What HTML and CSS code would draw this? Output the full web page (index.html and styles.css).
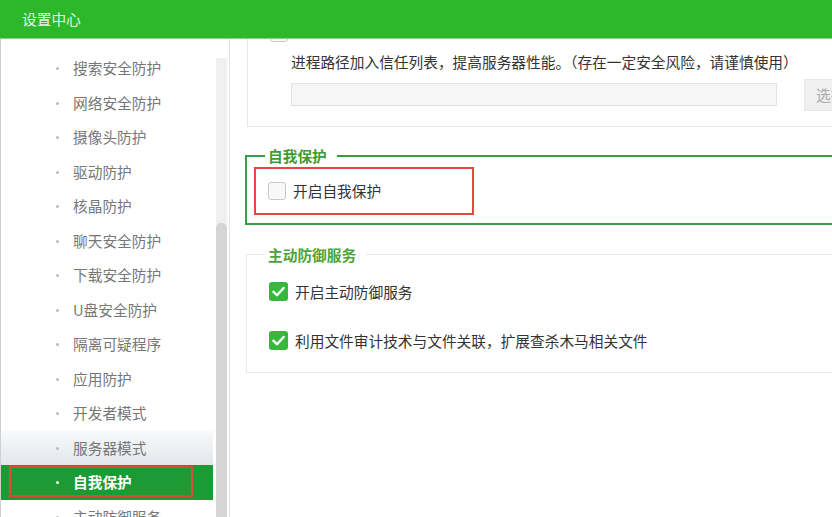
FILE: index.html
```html
<!DOCTYPE html>
<html lang="zh-CN">
<head>
  <meta charset="UTF-8" />
  <title>设置中心</title>
  <link rel="stylesheet" href="styles.css">
</head>
<body>

  <header class="titlebar">
    <span class="title">设置中心</span>
  </header>

  <div class="main">
    <aside class="sidebar">
      <ul class="nav">
        <li class="nav-item">搜索安全防护</li>
        <li class="nav-item">网络安全防护</li>
        <li class="nav-item">摄像头防护</li>
        <li class="nav-item">驱动防护</li>
        <li class="nav-item">核晶防护</li>
        <li class="nav-item">聊天安全防护</li>
        <li class="nav-item">下载安全防护</li>
        <li class="nav-item">U盘安全防护</li>
        <li class="nav-item">隔离可疑程序</li>
        <li class="nav-item">应用防护</li>
        <li class="nav-item">开发者模式</li>
        <li class="nav-item hover">服务器模式</li>
        <li class="nav-item active">自我保护<span class="mark"></span></li>
        <li class="nav-item">主动防御服务</li>
      </ul>
      <div class="scrollbar"><div class="thumb"></div></div>
    </aside>

    <section class="content">
      <div class="panel">

        <!-- server mode group, scrolled partly out of view -->
        <div class="group trust">
          <div class="check-row">
            <span class="cb"></span>
            <div class="text-col">
              <div class="line first">开启服务器模式，将常用服务器软件的相关进程加入信任</div>
              <div class="line">进程路径加入信任列表，提高服务器性能。（存在一定安全风险，请谨慎使用）</div>
              <div class="path-row">
                <div class="path-input"></div>
                <div class="pick-btn">选择</div>
              </div>
            </div>
          </div>
        </div>

        <fieldset class="group self">
          <legend>自我保护</legend>
          <div class="highlight">
            <span class="cb"></span>
            <span class="label">开启自我保护</span>
          </div>
        </fieldset>

        <fieldset class="group defense">
          <legend>主动防御服务</legend>
          <div class="opt">
            <span class="cb checked">
              <svg viewBox="0 0 19 19" width="19" height="19"><path d="M4.5 9.8 L8 13.2 L14.6 6" fill="none" stroke="#fff" stroke-width="2.4" stroke-linecap="round" stroke-linejoin="round"/></svg>
            </span>
            <span class="label">开启主动防御服务</span>
          </div>
          <div class="opt">
            <span class="cb checked">
              <svg viewBox="0 0 19 19" width="19" height="19"><path d="M4.5 9.8 L8 13.2 L14.6 6" fill="none" stroke="#fff" stroke-width="2.4" stroke-linecap="round" stroke-linejoin="round"/></svg>
            </span>
            <span class="label">利用文件审计技术与文件关联，扩展查杀木马相关文件</span>
          </div>
        </fieldset>

      </div>
    </section>
  </div>

</body>
</html>
```

FILE: styles.css
```css
* {
  box-sizing: border-box;
}

body {
  margin: 0;
  width: 832px;
  height: 517px;
  overflow: hidden;
  background: #fff;
  font-family: "Noto Sans CJK SC", "Noto Sans", sans-serif;
  font-size: 14.7px;
  color: #333;
}

/* Title bar */
.titlebar {
  position: relative;
  z-index: 2;
  height: 39px;
  background: #2db82b;
  border-bottom: 1px solid #86d583;
  display: flex;
  align-items: center;
  padding-left: 22px;
}

.title {
  color: rgba(255, 255, 255, 0.88);
  line-height: 20px;
}

.main {
  display: flex;
  height: 478px;
}

/* Sidebar */
.sidebar {
  width: 230px;
  flex-shrink: 0;
  display: flex;
  border-left: 1px solid #d0d0d0;
  border-right: 1px solid #e3e3e3;
  background: #fff;
}

.nav {
  list-style: none;
  margin: 0;
  padding: 12px 0 0;
  width: 212px;
}

.nav-item {
  position: relative;
  height: 34.5px;
  line-height: 34.5px;
  padding-left: 72px;
  color: #777;
  white-space: nowrap;
}

.nav-item::before {
  content: "";
  position: absolute;
  left: 55px;
  top: 16px;
  width: 3px;
  height: 3px;
  border-radius: 50%;
  background: #bbb;
}

.nav-item.hover {
  background: linear-gradient(#f8f9fa, #e3e6ea);
}

.nav-item.active {
  background: #1c9a33;
  color: #fff;
  font-weight: bold;
}

.nav-item.active::before {
  background: #fff;
}

.mark {
  position: absolute;
  left: 8px;
  top: 1px;
  width: 184px;
  height: 31px;
  border: 2px solid #dc4a3c;
}

.scrollbar {
  width: 11px;
  margin: 19px 0 0 3px;
  background: #f0f0f0;
}

.thumb {
  margin-top: 165px;
  height: 300px;
  background: #d5d5d5;
  border-radius: 5px 5px 0 0;
}

/* Content area */
.content {
  flex: 1;
  overflow: hidden;
}

.panel {
  width: 620px;
  padding-left: 15px;
}

.group {
  min-width: 0;
}

.cb {
  width: 18px;
  height: 18px;
  flex-shrink: 0;
  border: 1px solid #c9c9c9;
  border-radius: 3px;
  background: #f8f8f8;
}

.cb.checked {
  width: 19px;
  height: 19px;
  border: none;
  background: #35b83c;
}

.cb svg {
  display: block;
}

.label {
  margin-left: 7px;
  line-height: 20px;
  white-space: nowrap;
}

.trust {
  margin: -33.5px 0 0 2px;
  border: 1px solid #e6e6e6;
  padding: 11px 0 15px 22px;
}

.check-row {
  display: flex;
}

.check-row .cb {
  margin: 6px 3px 0 0;
}

.line {
  line-height: 29px;
  white-space: nowrap;
}

.line.first {
  line-height: 20px;
  padding-bottom: 9px;
}

.path-row {
  display: flex;
  align-items: center;
  height: 32px;
  margin-top: 3px;
}

.path-input {
  width: 486px;
  height: 23px;
  background: #f6f6f6;
  border: 1px solid #e2e2e2;
}

.pick-btn {
  margin-left: 27px;
  width: 70px;
  height: 32px;
  line-height: 30px;
  padding-left: 11px;
  background: #f0f0f0;
  border: 1px solid #e8e8e8;
  color: #aaa;
}

legend {
  line-height: 20px;
  padding: 0 10px 0 3px;
  font-weight: 600;
}

.self {
  margin: 19px 0 0;
  border: 2px solid #3a9c48;
  padding: 1px 0 8px 7px;
}

.self legend {
  margin-left: 11px;
  color: #3f9b33;
}

.highlight {
  display: flex;
  align-items: center;
  width: 220px;
  height: 48px;
  padding-left: 12px;
  border: 2px solid #e5463f;
}

.defense {
  margin: 20px 0 0 1px;
  border: 1px solid #e9e9e9;
  padding: 12px 0 16px 0;
}

.defense legend {
  margin-left: 18px;
  color: #4ca43a;
}

.opt {
  display: flex;
  align-items: center;
  height: 30px;
  padding-left: 22px;
}

.opt + .opt {
  margin-top: 19px;
}
```
